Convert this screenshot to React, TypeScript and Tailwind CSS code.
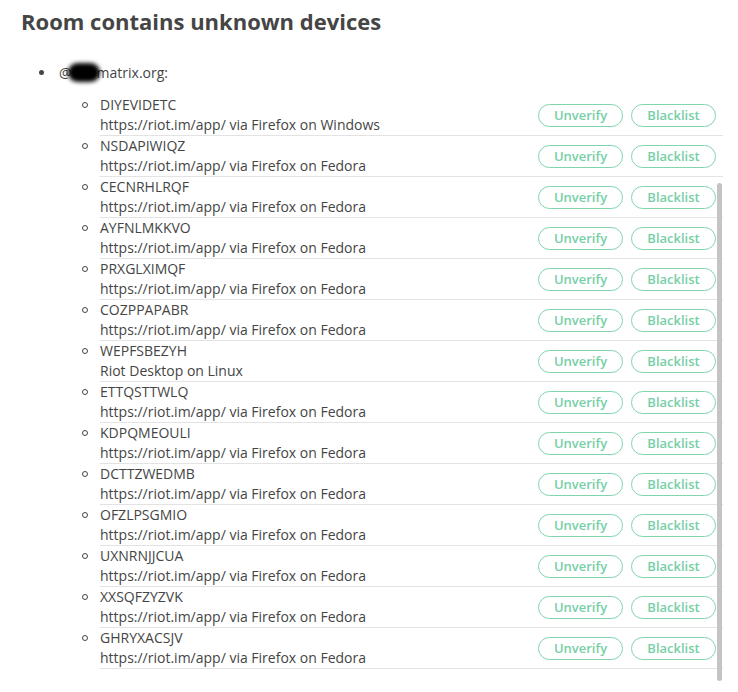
import React from 'react';

const devices: { id: string; desc: string }[] = [
  { id: 'DIYEVIDETC', desc: 'https://riot.im/app/ via Firefox on Windows' },
  { id: 'NSDAPIWIQZ', desc: 'https://riot.im/app/ via Firefox on Fedora' },
  { id: 'CECNRHLRQF', desc: 'https://riot.im/app/ via Firefox on Fedora' },
  { id: 'AYFNLMKKVO', desc: 'https://riot.im/app/ via Firefox on Fedora' },
  { id: 'PRXGLXIMQF', desc: 'https://riot.im/app/ via Firefox on Fedora' },
  { id: 'COZPPAPABR', desc: 'https://riot.im/app/ via Firefox on Fedora' },
  { id: 'WEPFSBEZYH', desc: 'Riot Desktop on Linux' },
  { id: 'ETTQSTTWLQ', desc: 'https://riot.im/app/ via Firefox on Fedora' },
  { id: 'KDPQMEOULI', desc: 'https://riot.im/app/ via Firefox on Fedora' },
  { id: 'DCTTZWEDMB', desc: 'https://riot.im/app/ via Firefox on Fedora' },
  { id: 'OFZLPSGMIO', desc: 'https://riot.im/app/ via Firefox on Fedora' },
  { id: 'UXNRNJJCUA', desc: 'https://riot.im/app/ via Firefox on Fedora' },
  { id: 'XXSQFZYZVK', desc: 'https://riot.im/app/ via Firefox on Fedora' },
  { id: 'GHRYXACSJV', desc: 'https://riot.im/app/ via Firefox on Fedora' },
];

const DeviceButton = ({ label }: { label: string }) => (
  <button className="w-[85px] h-[23px] rounded-full border border-[#80d4ae] text-[#76cfa6] text-[13px] font-semibold leading-none flex items-center justify-center bg-white">
    {label}
  </button>
);

export default function App() {
  return (
    <div
      className="relative w-[738px] h-[692px] bg-white text-[#454545] overflow-hidden"
      style={{ fontFamily: '"Open Sans", "Noto Sans", sans-serif' }}
    >
      <h2 className="pl-[21px] pt-[6px] text-[22px] leading-[30px] font-bold text-[#454545]">
        Room contains unknown devices
      </h2>

      {/* user line */}
      <div className="mt-[26px] flex items-center h-[20px] text-[14px]">
        <span className="w-[45px] flex justify-end pr-[1px]">
          <span className="w-[5px] h-[5px] rounded-full bg-[#454545]" />
        </span>
        <span className="ml-[14px]">@</span>
        <span className="inline-block w-[32px] h-[19px] bg-black rounded-full blur-[2px] -ml-[4px] -mr-[3px]" />
        <span>matrix.org:</span>
      </div>

      {/* device list */}
      <div className="mt-[13px] pr-[15px] text-[14px]">
        {devices.map((d) => (
          <div key={d.id} className="flex">
            <div className="w-[100px] flex justify-end pr-[12px] pt-[7px]">
              <span className="w-[6px] h-[6px] rounded-full border border-[#454545]" />
            </div>
            <div className="flex-1 flex items-center justify-between border-b border-[#e3e3e3] h-[41px] pr-[7px]">
              <div className="leading-[20px]">
                <div>{d.id}</div>
                <div>{d.desc}</div>
              </div>
              <div className="flex gap-[8px]">
                <DeviceButton label="Unverify" />
                <DeviceButton label="Blacklist" />
              </div>
            </div>
          </div>
        ))}
      </div>

      <div className="absolute left-[717px] top-[183px] w-[5px] h-[498px] rounded-full bg-[#c4c4c4]" />
    </div>
  );
}
